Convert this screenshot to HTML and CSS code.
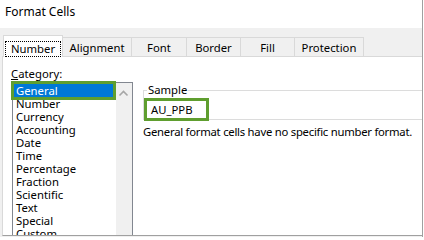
FILE: index.html
```html
<!DOCTYPE html>
<html>
<head>
<meta charset="utf-8">
<link rel="stylesheet" href="styles.css">
</head>
<body>
<div class="window">
  <div class="title">Format Cells</div>
  <div class="dialog">
    <div class="tabs">
      <div class="tab active"><span class="focus">Number</span></div>
      <div class="tab w69">Alignment</div>
      <div class="tab w55">Font</div>
      <div class="tab w54">Border</div>
      <div class="tab w54">Fill</div>
      <div class="tab w69">Protection</div>
    </div>
    <div class="panel">
      <div class="left">
        <div class="label"><u>C</u>ategory:</div>
        <div class="listbox">
          <div class="items">
            <div class="item selected">General</div>
            <div class="item">Number</div>
            <div class="item">Currency</div>
            <div class="item">Accounting</div>
            <div class="item">Date</div>
            <div class="item">Time</div>
            <div class="item">Percentage</div>
            <div class="item">Fraction</div>
            <div class="item">Scientific</div>
            <div class="item">Text</div>
            <div class="item">Special</div>
            <div class="item">Custom</div>
          </div>
          <div class="scrollbar">
            <svg class="arrow" width="16" height="17" viewBox="0 0 16 17"><path d="M3.5 12.5 L7.5 8.5 L11.5 12.5" fill="none" stroke="#a6a6a6" stroke-width="1.6"/></svg>
          </div>
        </div>
      </div>
      <div class="right">
        <fieldset class="group">
          <legend>Sample</legend>
          <div class="sample">AU_PPB</div>
        </fieldset>
        <div class="desc">General format cells have no specific number format.</div>
      </div>
    </div>
  </div>
</div>
</body>
</html>
```
FILE: styles.css
```css
html, body {
  margin: 0;
  padding: 0;
  background: #ffffff;
}
body {
  font-family: "Noto Sans", "Open Sans", sans-serif;
  font-size: 11.3px;
  color: #000;
  width: 424px;
  height: 237px;
  overflow: hidden;
}
.window {
  width: 423px;
  height: 237px;
  box-sizing: border-box;
  border-right: 1px solid #a0a0a0;
}
.title {
  height: 28px;
  box-sizing: border-box;
  padding: 4px 0 0 5px;
  font-size: 12px;
  line-height: 16px;
  background: #fff;
}
.dialog {
  background: #f0f0f0;
  height: 209px;
  box-sizing: border-box;
  padding: 7px 0 0 2px;
}
.tabs {
  display: flex;
  align-items: flex-end;
  height: 22px;
  box-sizing: border-box;
  padding-left: 1px;
  border-bottom: 1px solid #d9d9d9;
}
.tab {
  height: 19px;
  box-sizing: border-box;
  border-top: 1px solid #d9d9d9;
  border-right: 1px solid #d9d9d9;
  display: flex;
  align-items: center;
  justify-content: center;
  line-height: 14px;
  padding-top: 1px;
}
.tab.active {
  width: 60px;
  height: 22px;
  margin-bottom: -1px;
  border: 1px solid #d9d9d9;
  border-bottom: none;
  background: #fff;
  padding-top: 4px;
}
.focus {
  display: block;
  border: 1px dotted #000;
  padding: 0 5px;
  line-height: 14px;
}
.w69 { width: 69px; }
.w55 { width: 55px; }
.w54 { width: 54px; }
.panel {
  display: flex;
  height: 179px;
  box-sizing: border-box;
  background: #fff;
  border-left: 1px solid #d9d9d9;
  border-bottom: 1px solid #a0a0a0;
  padding-left: 8px;
  overflow: hidden;
}
.left {
  width: 122px;
  flex: none;
  padding-top: 10px;
}
.label {
  line-height: 14px;
}
.listbox {
  margin: 1px 0 0 1px;
  width: 121px;
  height: 200px;
  box-sizing: border-box;
  border: 1px solid #828790;
  display: flex;
}
.items {
  width: 103px;
  box-sizing: border-box;
  padding: 1px 3px 0 1px;
}
.item {
  line-height: 13px;
  height: 13px;
  padding-left: 2px;
  white-space: nowrap;
}
.item.selected {
  background: #0078d7;
  color: #fff;
  outline: 3px solid #5f9e2f;
}
.scrollbar {
  width: 16px;
  background: #f0f0f0;
}
.arrow {
  display: block;
}
.right {
  flex: 1;
  margin-left: 10px;
  min-width: 0;
}
.group {
  margin: 26px 0 0 0;
  padding: 4px 0 1px 3px;
  border: 1px solid #dcdcdc;
  border-right: none;
  min-width: 0;
}
.group legend {
  padding: 0 1px;
  line-height: 14px;
}
.sample {
  width: 59px;
  height: 17px;
  box-sizing: border-box;
  padding-left: 4px;
  line-height: 17px;
  outline: 3px solid #5f9e2f;
}
.desc {
  margin-top: 5px;
  line-height: 14px;
  white-space: nowrap;
  letter-spacing: -0.25px;
}
```
